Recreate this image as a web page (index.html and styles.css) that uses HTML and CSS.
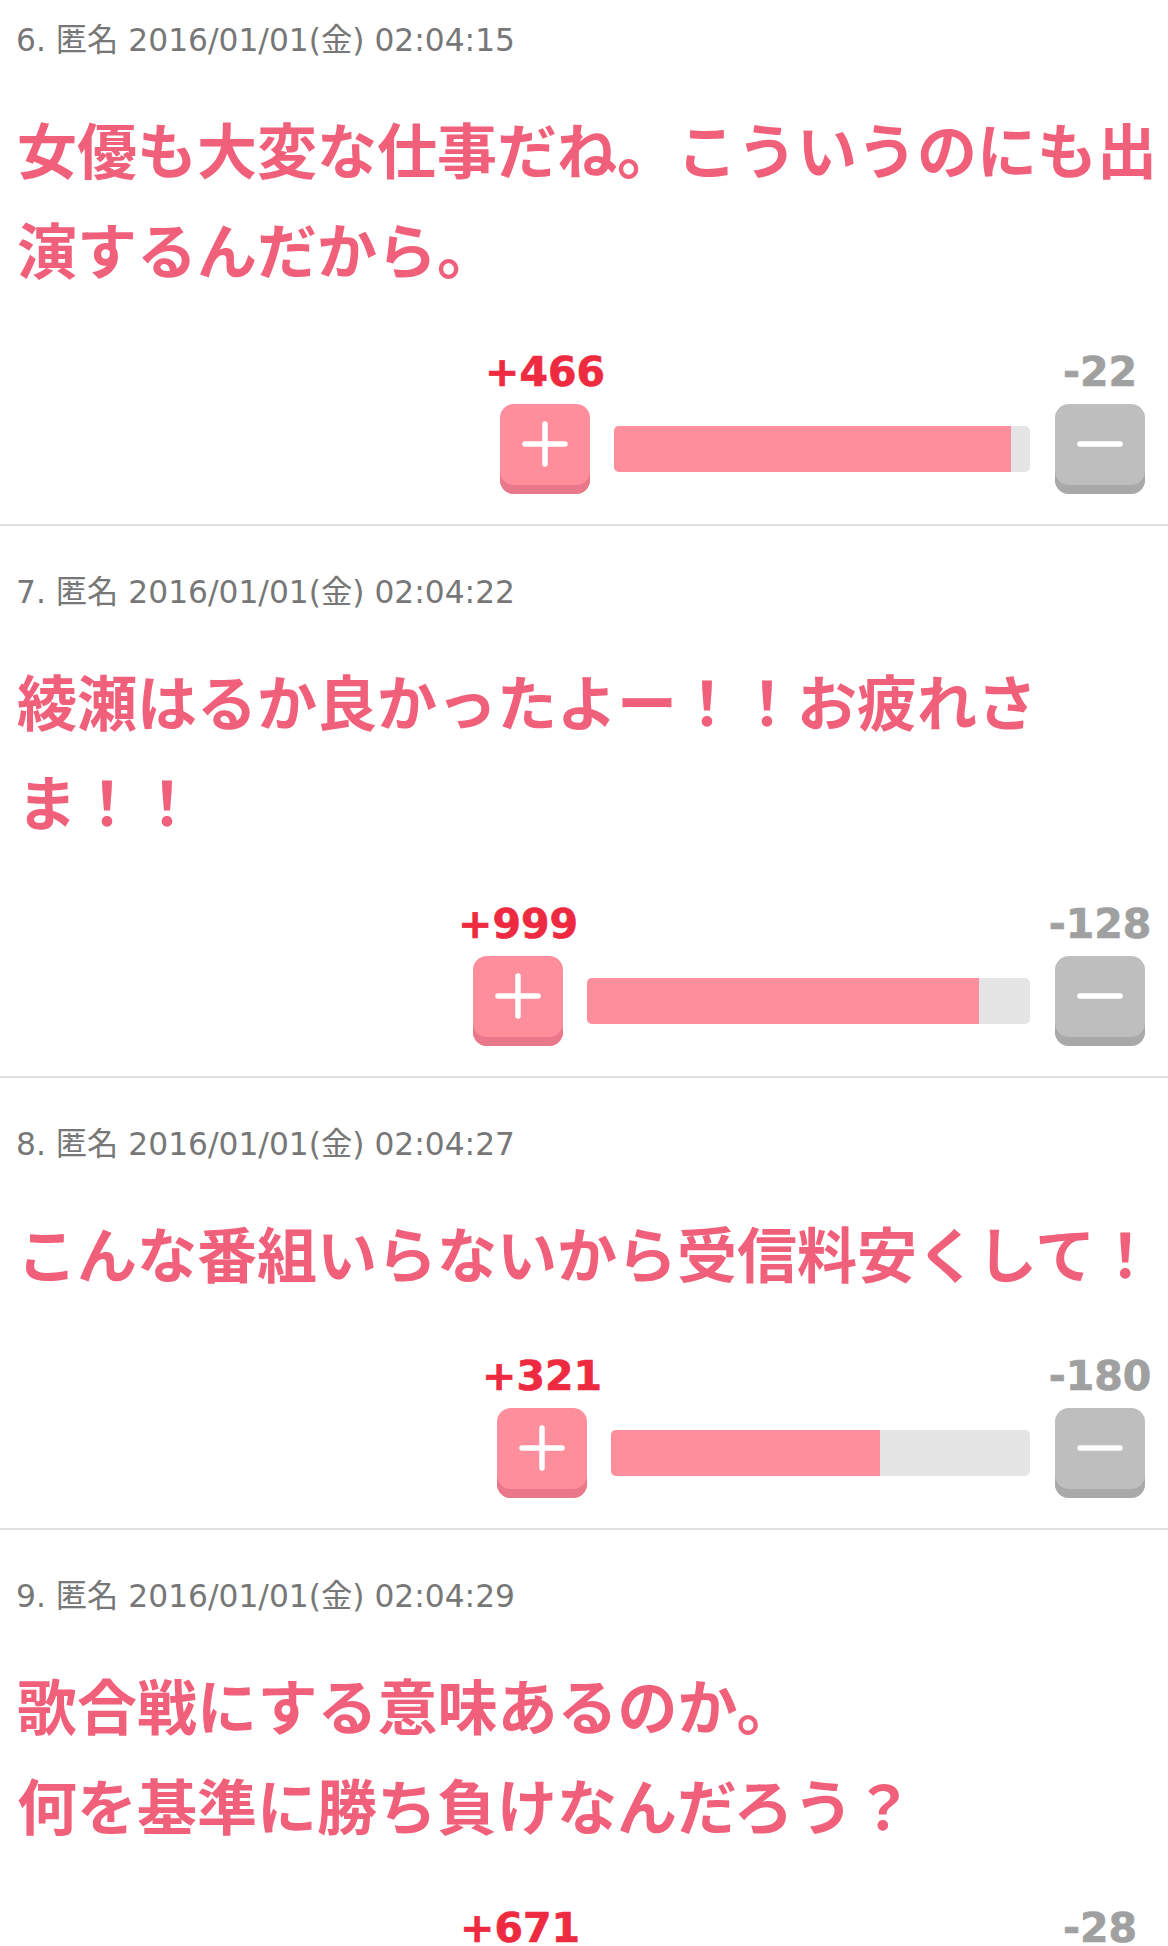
FILE: index.html
```html
<!DOCTYPE html>
<html lang="ja">
<head>
<meta charset="utf-8">
<title>コメント</title>
<link rel="stylesheet" href="styles.css">
</head>
<body>
<div class="comments">

  <div class="item">
    <div class="meta">6. 匿名 2016/01/01(金) 02:04:15</div>
    <div class="comment">女優も大変な仕事だね。こういうのにも出演するんだから。</div>
    <div class="vote">
      <div class="vote-col plus-col">
        <span class="count plus-count">+466</span>
        <div class="btn btn-plus"><svg class="icon" width="46" height="46" viewBox="0 0 46 46"><path d="M23 3V43M3 23H43" /></svg></div>
      </div>
      <div class="bar" style="width:416px"><div class="bar-fill" style="width:95.5%"></div></div>
      <div class="vote-col minus-col">
        <span class="count minus-count">-22</span>
        <div class="btn btn-minus"><svg class="icon" width="46" height="8" viewBox="0 0 46 8"><path d="M3 4H43" /></svg></div>
      </div>
    </div>
  </div>

  <div class="item">
    <div class="meta">7. 匿名 2016/01/01(金) 02:04:22</div>
    <div class="comment">綾瀬はるか良かったよー！！お疲れさま！！</div>
    <div class="vote">
      <div class="vote-col plus-col">
        <span class="count plus-count">+999</span>
        <div class="btn btn-plus"><svg class="icon" width="46" height="46" viewBox="0 0 46 46"><path d="M23 3V43M3 23H43" /></svg></div>
      </div>
      <div class="bar" style="width:443px"><div class="bar-fill" style="width:88.6%"></div></div>
      <div class="vote-col minus-col">
        <span class="count minus-count">-128</span>
        <div class="btn btn-minus"><svg class="icon" width="46" height="8" viewBox="0 0 46 8"><path d="M3 4H43" /></svg></div>
      </div>
    </div>
  </div>

  <div class="item">
    <div class="meta">8. 匿名 2016/01/01(金) 02:04:27</div>
    <div class="comment">こんな番組いらないから受信料安くして！</div>
    <div class="vote">
      <div class="vote-col plus-col">
        <span class="count plus-count">+321</span>
        <div class="btn btn-plus"><svg class="icon" width="46" height="46" viewBox="0 0 46 46"><path d="M23 3V43M3 23H43" /></svg></div>
      </div>
      <div class="bar" style="width:419px"><div class="bar-fill" style="width:64.1%"></div></div>
      <div class="vote-col minus-col">
        <span class="count minus-count">-180</span>
        <div class="btn btn-minus"><svg class="icon" width="46" height="8" viewBox="0 0 46 8"><path d="M3 4H43" /></svg></div>
      </div>
    </div>
  </div>

  <div class="item">
    <div class="meta">9. 匿名 2016/01/01(金) 02:04:29</div>
    <div class="comment">歌合戦にする意味あるのか。<br>何を基準に勝ち負けなんだろう？</div>
    <div class="vote">
      <div class="vote-col plus-col">
        <span class="count plus-count">+671</span>
        <div class="btn btn-plus"><svg class="icon" width="46" height="46" viewBox="0 0 46 46"><path d="M23 3V43M3 23H43" /></svg></div>
      </div>
      <div class="bar" style="width:441px"><div class="bar-fill" style="width:96%"></div></div>
      <div class="vote-col minus-col">
        <span class="count minus-count">-28</span>
        <div class="btn btn-minus"><svg class="icon" width="46" height="8" viewBox="0 0 46 8"><path d="M3 4H43" /></svg></div>
      </div>
    </div>
  </div>

</div>
</body>
</html>
```

FILE: styles.css
```css
html, body {
  margin: 0;
  padding: 0;
  background: #ffffff;
}

.comments {
  display: flex;
  flex-direction: column;
}

.item {
  padding: 46px 0 30px;
  border-top: 2px solid #e1e1e1;
}

.item:first-child {
  border-top: 0;
  padding-top: 20px;
}

.meta {
  padding: 0 8px 0 16px;
  font-family: "DejaVu Sans", "Noto Sans CJK JP", sans-serif;
  font-size: 31.3px;
  line-height: 40px;
  color: #777777;
  white-space: nowrap;
}

.comment {
  margin-top: 38px;
  padding: 0 8px 0 17px;
  font-family: "Noto Sans CJK JP", sans-serif;
  font-weight: 700;
  font-size: 60px;
  line-height: 100px;
  color: #f1607a;
  line-break: strict;
}

.vote {
  margin-top: 50px;
  display: flex;
  justify-content: flex-end;
  align-items: flex-end;
  padding-right: 13px;
}

.vote-col {
  display: flex;
  flex-direction: column;
  align-items: center;
  gap: 8px;
}

.plus-col {
  width: 120px;
}

.minus-col {
  width: 110px;
}

.count {
  font-family: "DejaVu Sans", sans-serif;
  font-weight: 700;
  font-size: 41px;
  line-height: 48px;
  white-space: nowrap;
  -webkit-text-stroke: 0.7px currentColor;
}

.plus-count {
  color: #ee2a41;
}

.minus-count {
  color: #a0a0a0;
}

.btn {
  width: 90px;
  height: 90px;
  box-sizing: border-box;
  padding-bottom: 11px;
  border-radius: 14px;
  display: flex;
  align-items: center;
  justify-content: center;
}

.btn-plus {
  background: #ff8e9c;
  box-shadow: inset 0 -9px 0 #e9798a;
}

.btn-minus {
  background: #bebebe;
  box-shadow: inset 0 -9px 0 #a9a9a9;
}

.icon path {
  fill: none;
  stroke: #ffffff;
  stroke-width: 5.5;
  stroke-linecap: round;
}

.bar {
  height: 46px;
  margin: 0 15px 22px 9px;
  background: #e5e5e5;
  border-radius: 5px;
  overflow: hidden;
  display: flex;
}

.bar-fill {
  height: 100%;
  background: #ff8e9c;
}
```
